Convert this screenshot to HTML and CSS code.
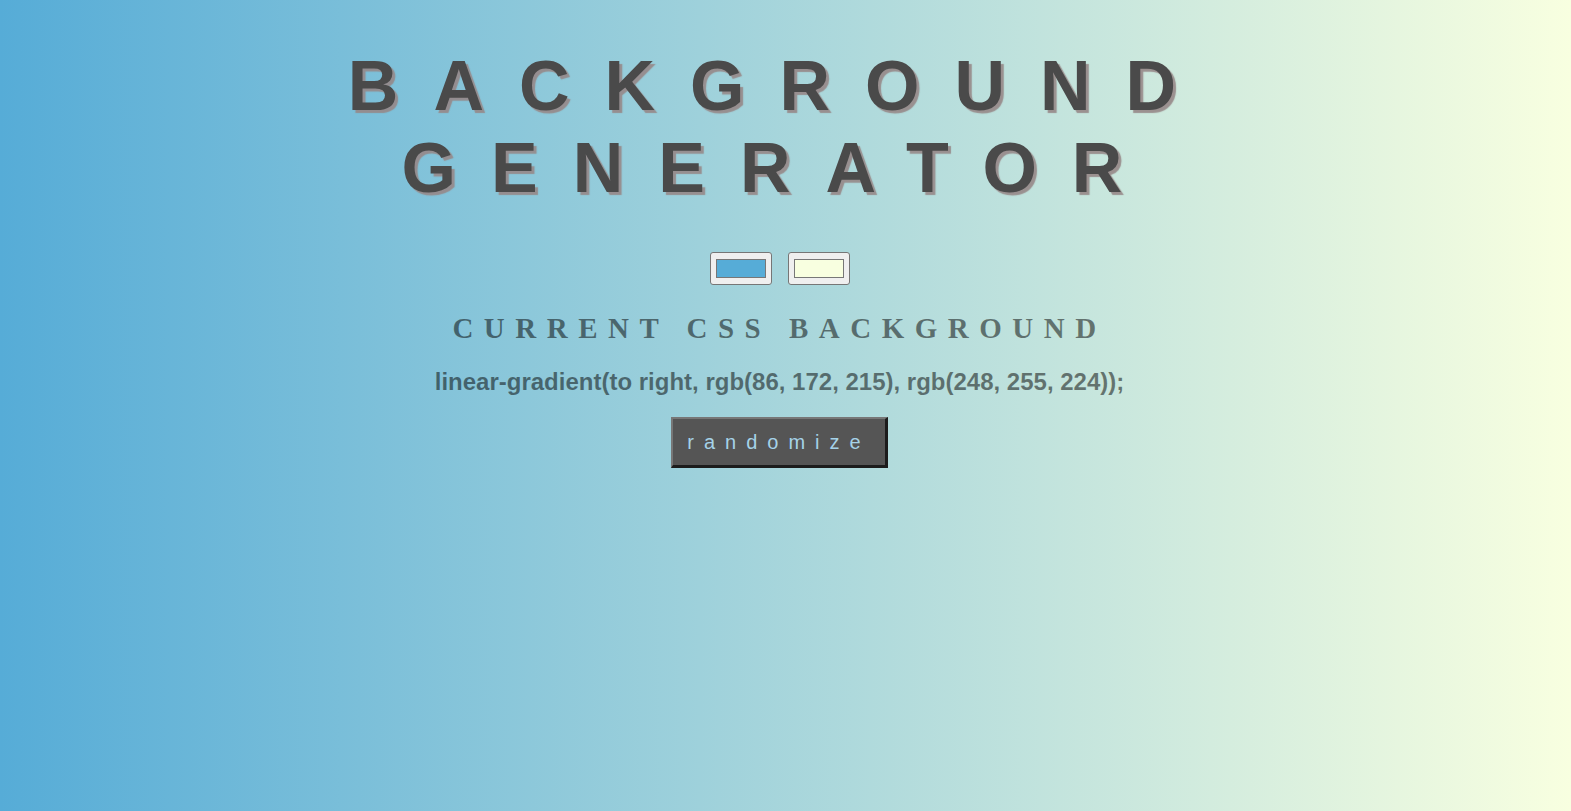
FILE: index.html
```html
<!DOCTYPE html>
<html>
<head>
<meta charset="utf-8">
<title>Background Generator</title>
<link rel="stylesheet" href="styles.css">
</head>
<body class="page">
  <h1 class="title">Background Generator</h1>
  <div class="pickers">
    <input class="picker" type="color" value="#56acd7">
    <input class="picker" type="color" value="#f8ffe0">
  </div>
  <h2 class="subtitle">Current CSS Background</h2>
  <h3 class="css-value">linear-gradient(to right, rgb(86, 172, 215), rgb(248, 255, 224));</h3>
  <button class="randomize" type="button">randomize</button>
</body>
</html>
```

FILE: styles.css
```css
html {
  min-height: 100%;
}

.page {
  margin: 0;
  min-height: 811px;
  padding: 45px 12px 0 0;
  box-sizing: border-box;
  text-align: center;
  background: linear-gradient(to right, rgb(86, 172, 215), rgb(248, 255, 224));
  font-family: "Liberation Sans", Arial, sans-serif;
}

.title {
  margin: 0 auto;
  font-family: "Liberation Sans", Arial, sans-serif;
  font-weight: bold;
  font-size: 70px;
  line-height: 82px;
  letter-spacing: 0.5em;
  text-transform: uppercase;
  color: #4a4a4a;
  text-shadow: 3px 3px 1px rgba(150, 135, 135, 0.9);
}

.pickers {
  display: flex;
  justify-content: center;
  gap: 16px;
  margin-top: 43px;
}

.picker {
  -webkit-appearance: none;
  appearance: none;
  width: 62px;
  height: 33px;
  padding: 1px 2.5px;
  margin: 0;
  border: 1px solid #767676;
  border-radius: 3px;
  background: #efefef;
  box-sizing: border-box;
  cursor: pointer;
}

.picker::-webkit-color-swatch-wrapper {
  padding: 5px 2.5px;
}

.picker::-webkit-color-swatch {
  border: 1px solid #777777;
  border-radius: 0;
}

.subtitle {
  margin: 25px 0 0;
  font-family: "Liberation Serif", "Times New Roman", serif;
  font-weight: bold;
  font-size: 29px;
  line-height: 36px;
  letter-spacing: 10.5px;
  text-transform: uppercase;
  color: rgba(0, 0, 0, 0.5);
}

.css-value {
  margin: 22px 0 0;
  font-family: "Liberation Sans", Arial, sans-serif;
  font-weight: bold;
  font-size: 24px;
  line-height: 28px;
  color: rgba(0, 0, 0, 0.5);
}

.randomize {
  margin-top: 21px;
  width: 217px;
  height: 51px;
  background: #555555;
  border-style: solid;
  border-width: 2px 3px 3px 2px;
  border-color: #777777 #1c1c1c #1c1c1c #777777;
  color: #a5d2e8;
  font-family: "Liberation Sans", Arial, sans-serif;
  font-size: 20px;
  letter-spacing: 0.5em;
  padding: 0;
  cursor: pointer;
}
```
